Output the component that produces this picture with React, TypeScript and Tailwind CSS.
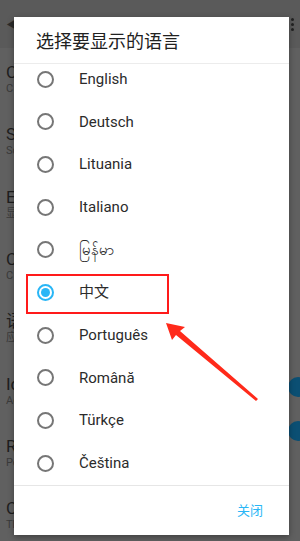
import React from "react";

const langs = [
  "English",
  "Deutsch",
  "Lituania",
  "Italiano",
  "မြန်မာ",
  "中文",
  "Português",
  "Română",
  "Türkçe",
  "Čeština",
];

// dimmed settings rows behind the dialog
const bgRows = [
  ["C", "C"],
  ["S", "Sc"],
  ["E", "显"],
  ["C", "C"],
  ["语", "应"],
  ["Ic", "Ac"],
  ["R", "Pe"],
  ["C", "Th"],
];

function Radio({ checked }: { checked: boolean }) {
  return checked ? (
    <span className="flex h-[17px] w-[17px] items-center justify-center rounded-full border-2 border-[#29b6f6]">
      <span className="h-[9px] w-[9px] rounded-full bg-[#29b6f6]" />
    </span>
  ) : (
    <span className="h-[17px] w-[17px] rounded-full border-2 border-[#767676]" />
  );
}

export default function App() {
  const selected = "中文";

  return (
    <div
      className="relative h-[541px] w-[300px] overflow-hidden bg-[#606060]"
      style={{ fontFamily: 'Roboto, "Noto Sans CJK SC", sans-serif' }}
    >
      {/* background screen */}
      <div className="flex h-[48px] items-center justify-between bg-[#5a5a5a] pl-[6px] pr-[6px]">
        <span className="text-[14px] text-[#2a2a2a]">◀</span>
        <span className="flex flex-col gap-[2px]">
          <span className="h-[3px] w-[3px] rounded-full bg-[#222]" />
          <span className="h-[3px] w-[3px] rounded-full bg-[#222]" />
          <span className="h-[3px] w-[3px] rounded-full bg-[#222]" />
        </span>
      </div>
      <div className="flex flex-col pl-[6px]">
        {bgRows.map(([t, s], i) => (
          <div key={i} className="flex h-[62.3px] flex-col justify-center">
            <span className="text-[17px] leading-[20px] text-[#1e1e1e]">{t}</span>
            <span className="text-[11px] leading-[14px] text-[#3a3a3a]">{s}</span>
          </div>
        ))}
      </div>
      <span className="absolute left-[288px] top-[377px] h-[20px] w-[20px] rounded-full bg-[#0b4f73]" />
      <span className="absolute left-[288px] top-[421px] h-[20px] w-[20px] rounded-full bg-[#0b4f73]" />

      {/* dialog */}
      <div className="absolute left-[14px] top-[17px] flex h-[518px] w-[275px] flex-col bg-white shadow-[0_2px_6px_rgba(0,0,0,0.35)]">
        <div className="flex h-[47px] shrink-0 items-center border-b border-[#ececec] pl-[22px] pt-[3px] text-[18px] text-[#212121]">
          选择要显示的语言
        </div>
        <div className="flex-1 overflow-hidden">
          <div className="mt-[-6px] flex flex-col">
            {langs.map((l) => (
              <div key={l} className="flex h-[42.65px] items-center pl-[23px]">
                <Radio checked={l === selected} />
                <span className="ml-[25px] text-[15px] text-[#2b2b2b]">{l}</span>
              </div>
            ))}
          </div>
        </div>
        <div className="flex h-[50px] shrink-0 items-center justify-end border-t border-[#e6e6e6] pr-[26px]">
          <span className="text-[13px] text-[#29b6f6]">关闭</span>
        </div>
      </div>

      {/* annotation */}
      <div className="absolute left-[26px] top-[274px] h-[40px] w-[143px] border-2 border-[#ff1a1a]" />
      <svg className="absolute left-0 top-0" width="300" height="541" viewBox="0 0 300 541">
        <polygon
          points="166,323 185,327 180,331 258,399 256,401 176,335 172,340"
          fill="#ff2a1a"
        />
      </svg>
    </div>
  );
}
